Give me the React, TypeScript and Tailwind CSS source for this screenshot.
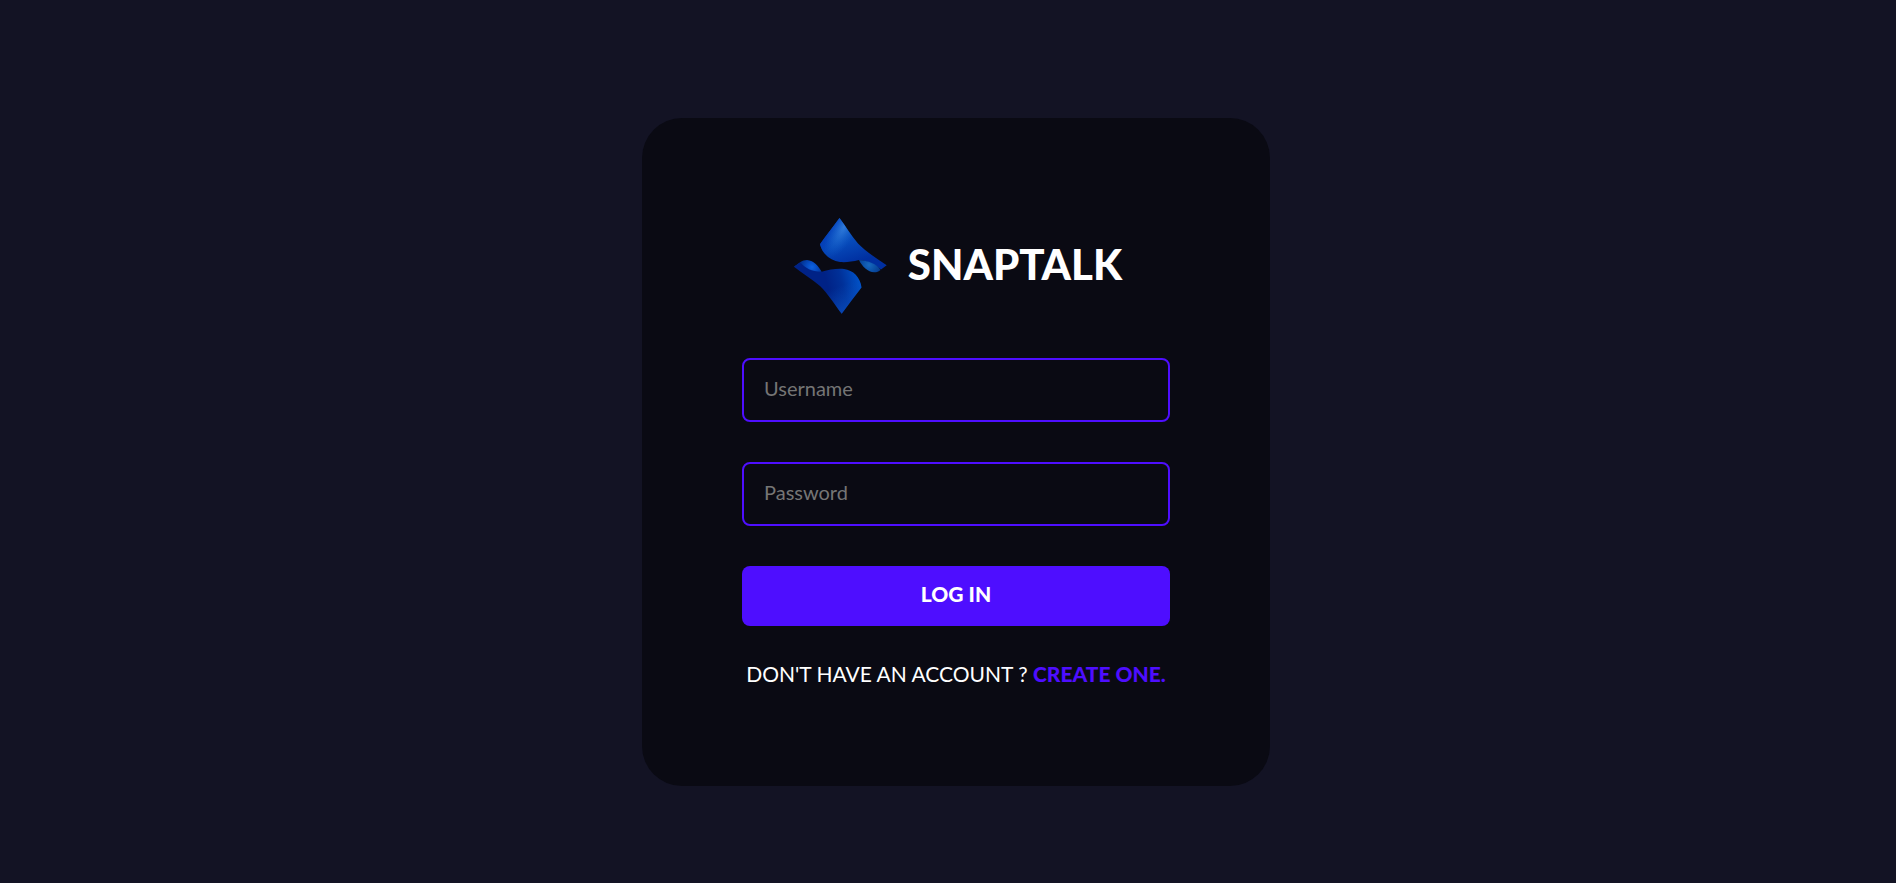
function Logo() {
  return (
    <svg viewBox="0 0 100 100" className="size-[100px] shrink-0" role="img" aria-label="Snaptalk logo">
      <defs>
        <linearGradient id="top" x1="48" y1="8" x2="60" y2="46" gradientUnits="userSpaceOnUse">
          <stop offset="0" stopColor="#0f5cc8" />
          <stop offset="0.5" stopColor="#0648b8" />
          <stop offset="1" stopColor="#002fa0" />
        </linearGradient>
        <radialGradient
          id="topShine"
          cx="0"
          cy="0"
          r="1"
          gradientUnits="userSpaceOnUse"
          gradientTransform="translate(54 9) rotate(118) scale(34 13)"
        >
          <stop offset="0" stopColor="#3c86e0" stopOpacity="0.75" />
          <stop offset="1" stopColor="#1464d0" stopOpacity="0" />
        </radialGradient>
        <linearGradient id="topEdge" x1="37" y1="12" x2="48" y2="20" gradientUnits="userSpaceOnUse">
          <stop offset="0" stopColor="#0036b4" stopOpacity="0.9" />
          <stop offset="1" stopColor="#0036b4" stopOpacity="0" />
        </linearGradient>
        <radialGradient id="topCurl" cx="79" cy="47" r="12" gradientUnits="userSpaceOnUse">
          <stop offset="0" stopColor="#1769be" />
          <stop offset="0.5" stopColor="#0c52a8" />
          <stop offset="1" stopColor="#053c90" />
        </radialGradient>
        <linearGradient id="bottom" x1="38" y1="70" x2="70" y2="62" gradientUnits="userSpaceOnUse">
          <stop offset="0" stopColor="#002286" />
          <stop offset="0.45" stopColor="#003098" />
          <stop offset="1" stopColor="#0052c8" />
        </linearGradient>
        <linearGradient id="bottomTip" x1="50" y1="68" x2="58" y2="90" gradientUnits="userSpaceOnUse">
          <stop offset="0" stopColor="#0b54c4" stopOpacity="0" />
          <stop offset="1" stopColor="#0b54c4" stopOpacity="0.6" />
        </linearGradient>
        <radialGradient id="bottomCurl" cx="22" cy="49" r="13" gradientUnits="userSpaceOnUse">
          <stop offset="0" stopColor="#0d62e0" />
          <stop offset="0.5" stopColor="#0546b8" />
          <stop offset="1" stopColor="#002c86" />
        </radialGradient>
      </defs>
      <path
        d="M49.500 0C56 8.500 61 17.500 68 25.500C76 34 87 40.500 96.700 47.300L91 51.500C85 46.500 77 42.500 69 42C62 43.700 56 44.500 50 44C40 42.500 32 35.500 30 26.300C35.500 18 43 9 49.500 0Z"
        fill="url(#top)"
      />
      <path
        d="M49.500 0C56 8.500 61 17.500 68 25.500L50 44C40 42.500 32 35.500 30 26.300C35.500 18 43 9 49.500 0Z"
        fill="url(#topEdge)"
      />
      <path
        d="M49.500 0C56 8.500 61 17.500 68 25.500L50 44C40 42.500 32 35.500 30 26.300C35.500 18 43 9 49.500 0Z"
        fill="url(#topShine)"
      />
      <path d="M69 42C72 48.500 78 54 84 54.300C87 54.300 88.700 53.400 90.500 52C87 46 78 42.500 69 42Z" fill="url(#topCurl)" />
      <path d="M4 48.700C8 45.500 12 41.900 17 41.900C24 42.500 28.500 48 31.700 53.700L22 55Z" fill="url(#bottomCurl)" />
      <path
        d="M4 48.700L10.500 44.500C15 50 22 53.800 31.700 53.700C39 51.700 46 50.300 54 50.900C63 52 70.500 59 71.500 69.500C65 78 58 87 51.700 95.700C44.500 86.500 38 75.500 30 68C22 61 12 55 4 48.700Z"
        fill="url(#bottom)"
      />
      <path
        d="M54 50.900C63 52 70.500 59 71.500 69.500C65 78 58 87 51.700 95.700C44.500 86.500 38 75.500 30 68Z"
        fill="url(#bottomTip)"
      />
    </svg>
  );
}

const fieldClass =
  "h-16 w-full rounded-lg border-2 border-[#4e0eff] bg-transparent px-5 pb-1 text-xl text-white placeholder:text-[#757575] focus:outline-none";

export default function App() {
  return (
    <main className="flex min-h-screen flex-col items-center justify-center bg-[#131324] pt-[21px] pl-4 font-[Lato,sans-serif]">
      <form
        className="flex w-full max-w-[628px] flex-col gap-10 rounded-[40px] bg-[#0a0a13] p-[100px]"
        onSubmit={(event) => event.preventDefault()}
      >
        <div className="flex items-center justify-center gap-[18px]">
          <Logo />
          <h1 className="pb-2 text-[42px] leading-10 font-black text-white uppercase">Snaptalk</h1>
        </div>
        <input className={fieldClass} type="text" name="username" placeholder="Username" aria-label="Username" />
        <input className={fieldClass} type="password" name="password" placeholder="Password" aria-label="Password" />
        <button
          type="submit"
          className="h-[60px] w-full cursor-pointer rounded-lg bg-[#4e0eff] pb-1 text-[21px] font-black text-white uppercase"
        >
          Log In
        </button>
        <p className="pb-1 text-center text-[21px] leading-4 whitespace-nowrap text-white uppercase">
          Don't have an account ?{" "}
          <a href="#register" className="font-black text-[#4e0eff]">
            Create one.
          </a>
        </p>
      </form>
    </main>
  );
}
